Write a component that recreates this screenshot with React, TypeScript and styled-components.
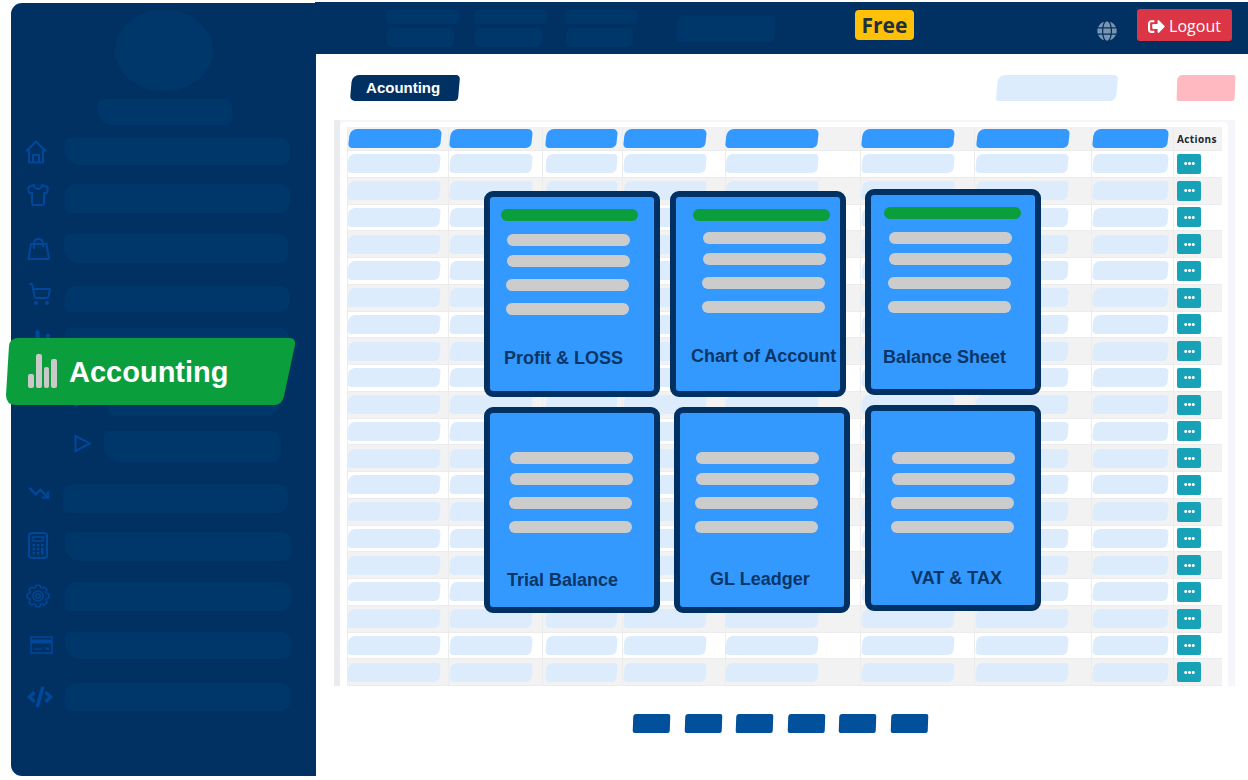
import React from "react";
import styled, { createGlobalStyle } from "styled-components";
import { FaCode, FaEllipsisH, FaGlobe, FaSignOutAlt } from "react-icons/fa";
import { Shirt, ShoppingCart, TrendingDown } from "lucide-react";

const NAVY = "#013162";
const GHOST = "#00376a";
const ICON = "#01479a";
const SKY = "#3399ff";
const PALE = "#dcecfd";

const HomeIcon = () => (
  <svg width="22" height="24" viewBox="0 0 22 24" fill="none" stroke={ICON} strokeWidth="2" strokeLinejoin="round">
    <path d="M1 11.5 L11 1.5 L21 11.5" />
    <path d="M4 9 V22.5 H18 V9" />
    <path d="M8 22.5 V15 H14 V22.5" />
  </svg>
);

const BagIcon = () => (
  <svg width="23" height="22" viewBox="0 0 23 22" fill="none" stroke={ICON} strokeWidth="2" strokeLinejoin="round">
    <path d="M4 6 H19.5 L22 21 H1.5 Z" />
    <path d="M7 11 V6 Q7 1 11.5 1 Q16 1 16 6 V9" />
  </svg>
);

const TriangleIcon = () => (
  <svg width="18" height="19" viewBox="0 0 18 19" fill="none" stroke={ICON} strokeWidth="2">
    <polygon points="1.5,2 16,9.5 1.5,17" />
  </svg>
);

const CalculatorIcon = () => (
  <svg width="20" height="27" viewBox="0 0 20 27" fill="none" stroke={ICON}>
    <rect x="1" y="1" width="18" height="25" rx="3" strokeWidth="2" />
    <rect x="5" y="5" width="10" height="4" strokeWidth="1.5" />
    <g fill={ICON} stroke="none">
      <rect x="4.5" y="12" width="2.4" height="2.4" />
      <rect x="8.8" y="12" width="2.4" height="2.4" />
      <rect x="13" y="12" width="2.4" height="2.4" />
      <rect x="4.5" y="16" width="2.4" height="2.4" />
      <rect x="8.8" y="16" width="2.4" height="2.4" />
      <rect x="4.5" y="20" width="2.4" height="2.4" />
      <rect x="8.8" y="20" width="2.4" height="2.4" />
      <rect x="13" y="16" width="2.4" height="6.4" />
    </g>
  </svg>
);

// 8 tooth gear outline, points worked out around the centre
const gearPath = Array.from({ length: 8 }, (_, i) => {
  const a = (i * Math.PI) / 4;
  const pt = (r: number, d: number) =>
    `${(12 + r * Math.cos(a + d)).toFixed(2)} ${(12 + r * Math.sin(a + d)).toFixed(2)}`;
  return `${i === 0 ? "M" : "L"}${pt(8.6, -0.36)} L${pt(11, -0.17)} L${pt(11, 0.17)} L${pt(8.6, 0.36)}`;
}).join(" ");

const GearIcon = () => (
  <svg width="24" height="24" viewBox="0 0 24 24" fill="none" stroke={ICON} strokeWidth="1.5" strokeLinejoin="round">
    <path d={`${gearPath} Z`} />
    <circle cx="12" cy="12" r="5" />
    <circle cx="12" cy="12" r="2.2" />
  </svg>
);

const CardIcon = () => (
  <svg width="23" height="18" viewBox="0 0 23 18" fill="none" stroke={ICON}>
    <rect x="1" y="1" width="21" height="16" strokeWidth="1.6" />
    <rect x="1" y="3.5" width="21" height="4" fill={ICON} strokeWidth="0" />
    <path d="M4 13 H12" strokeWidth="1.2" />
    <path d="M15.5 12.5 H19" strokeWidth="2" />
  </svg>
);

const ChartIcon = ({ color, width, height }: { color: string; width: number; height: number }) => (
  <svg width={width} height={height} viewBox="0 0 29 34" fill={color}>
    <rect x="0" y="20" width="6" height="14" rx="2" />
    <rect x="8" y="0" width="6" height="34" rx="2" />
    <rect x="16" y="13" width="5" height="21" rx="2" />
    <rect x="23" y="5" width="6" height="29" rx="2" />
  </svg>
);

const navRows = [
  { icon: <HomeIcon />, iconLeft: 25, up: 0, left: 65, right: 290, top: 138, bottom: 165 },
  { icon: <Shirt size={24} color={ICON} strokeWidth={2} />, iconLeft: 26, up: 7, left: 65, right: 290, top: 184, bottom: 213 },
  { icon: <BagIcon />, iconLeft: 27, up: 0, left: 64, right: 288, top: 234, bottom: 263 },
  { icon: <ShoppingCart size={24} color={ICON} strokeWidth={2} />, iconLeft: 28, up: 11, left: 65, right: 290, top: 286, bottom: 312 },
  { icon: <ChartIcon color={ICON} width={20} height={24} />, iconLeft: 30, up: 0, left: 65, right: 289, top: 328, bottom: 356 },
  { icon: <TriangleIcon />, iconLeft: 74, up: 4, left: 108, right: 279, top: 384, bottom: 416 },
  { icon: <TriangleIcon />, iconLeft: 74, up: 6, left: 104, right: 281, top: 431, bottom: 462 },
  { icon: <TrendingDown size={22} color={ICON} strokeWidth={2.6} />, iconLeft: 28, up: 12, left: 63, right: 288, top: 484, bottom: 513 },
  { icon: <CalculatorIcon />, iconLeft: 28, up: 2, left: 65, right: 291, top: 532, bottom: 561 },
  { icon: <GearIcon />, iconLeft: 26, up: 1, left: 65, right: 291, top: 582, bottom: 611 },
  { icon: <CardIcon />, iconLeft: 30, up: 1, left: 65, right: 291, top: 632, bottom: 659 },
  { icon: <FaCode size={26} color={ICON} />, iconLeft: 27, up: 0, left: 65, right: 291, top: 683, bottom: 711 },
];

const columns = [
  { width: 101, bar: 92, headX: 2, cellX: 1 },
  { width: 94, bar: 82, headX: 2, cellX: 2 },
  { width: 80, bar: 71, headX: 4, cellX: 4 },
  { width: 103, bar: 82, headX: 2, cellX: 2 },
  { width: 135, bar: 92, headX: 1, cellX: 1 },
  { width: 114, bar: 92, headX: 2, cellX: 2 },
  { width: 117, bar: 92, headX: 3, cellX: 2 },
  { width: 82, bar: 75, headX: 2, cellX: 2 },
];

const tableRows = Array.from({ length: 20 }, (_, i) => i);

const cards = [
  { label: "Profit & LOSS", left: 484, top: 191, barX: 11, lineTop: 37, lineX: 17, labelX: 14, labelGap: 33, green: true },
  { label: "Chart of Account", left: 670, top: 191, barX: 17, lineTop: 35, lineX: 27, labelX: 15, labelGap: 33, green: true },
  { label: "Balance Sheet", left: 865, top: 189, barX: 13, lineTop: 37, lineX: 18, labelX: 12, labelGap: 34, green: true },
  { label: "Trial Balance", left: 484, top: 407, barX: 0, lineTop: 39, lineX: 20, labelX: 17, labelGap: 37, green: false },
  { label: "GL Leadger", left: 674, top: 407, barX: 0, lineTop: 39, lineX: 16, labelX: 30, labelGap: 36, green: false },
  { label: "VAT & TAX", left: 865, top: 405, barX: 0, lineTop: 41, lineX: 21, labelX: 40, labelGap: 35, green: false },
];

const App = () => {
  return (
    <>
      <GlobalStyle />
      <Page>
        <Sidebar>
          <Avatar />
          <UserName />
          <NavList>
            {navRows.map((row, i) => (
              <NavRow
                key={row.top}
                $gap={row.top - (i === 0 ? 125 : navRows[i - 1].bottom)}
                $height={row.bottom - row.top}
              >
                <IconSlot $width={row.left - 11} $pad={row.iconLeft - 11} $up={row.up}>
                  {row.icon}
                </IconSlot>
                <NavBar $width={row.right - row.left} $alt={i % 2 === 0} />
              </NavRow>
            ))}
          </NavList>
          <ActiveItem>
            <ChartIcon color="#c9c9c9" width={29} height={34} />
            <ActiveLabel>Accounting</ActiveLabel>
          </ActiveItem>
        </Sidebar>

        <Main>
          <TopBar>
            <MenuGroup>
              <MenuStack>
                <MenuTop />
                <MenuBottom />
              </MenuStack>
              <MenuStack>
                <MenuTop />
                <MenuBottom />
              </MenuStack>
              <MenuStack>
                <MenuTop />
                <MenuBottom />
              </MenuStack>
              <MenuWide />
            </MenuGroup>
            <FreeBadge>Free</FreeBadge>
            <GlobeSlot>
              <FaGlobe size={20} color="#7b95b0" />
            </GlobeSlot>
            <LogoutButton>
              <FaSignOutAlt size={17} />
              Logout
            </LogoutButton>
          </TopBar>

          <TitleRow>
            <PageTitle>
              <TitleText>Acounting</TitleText>
            </PageTitle>
            <SearchGhost />
            <DangerGhost />
          </TitleRow>

          <TablePanel>
            <TableCard>
              <Row $head>
                {columns.map((col) => (
                  <Cell key={col.width + col.headX} $width={col.width}>
                    <HeadBar $width={col.bar} $x={col.headX} />
                  </Cell>
                ))}
                <ActionsCell>Actions</ActionsCell>
              </Row>
              {tableRows.map((row) => (
                <Row key={row} $striped={row % 2 === 1}>
                  {columns.map((col) => (
                    <Cell key={col.width + col.cellX} $width={col.width}>
                      <CellBar $width={col.bar} $x={col.cellX} />
                    </Cell>
                  ))}
                  <ActionsCell>
                    <MoreButton>
                      <FaEllipsisH size={11} />
                    </MoreButton>
                  </ActionsCell>
                </Row>
              ))}
            </TableCard>
          </TablePanel>

          <Pagination>
            {[1, 2, 3, 4, 5, 6].map((n) => (
              <PageButton key={n} />
            ))}
          </Pagination>
        </Main>

        {cards.map((card) => (
          <ReportCard key={card.label} $left={card.left} $top={card.top}>
            {card.green && <GreenBar $x={card.barX} />}
            <Lines $top={card.lineTop} $x={card.lineX}>
              <Line />
              <Line />
              <Line />
              <Line />
            </Lines>
            <CardLabel $x={card.labelX} $gap={card.labelGap}>
              {card.label}
            </CardLabel>
          </ReportCard>
        ))}
      </Page>
    </>
  );
};

export default App;

const GlobalStyle = createGlobalStyle`
  html, body {
    margin: 0;
    padding: 0;
    background: #fff;
    overflow: hidden;
  }
  * {
    box-sizing: border-box;
  }
`;

const Page = styled.div`
  position: relative;
  display: flex;
  align-items: flex-start;
  width: 1248px;
  height: 780px;
  padding: 2px 0 0 11px;
  overflow: hidden;
  font-family: "Liberation Sans", Arial, sans-serif;
`;

const Sidebar = styled.aside`
  position: relative;
  flex: none;
  display: flex;
  flex-direction: column;
  align-items: center;
  width: 305px;
  height: 773px;
  margin-top: 1px;
  padding-top: 7px;
  background: ${NAVY};
  border-radius: 11px 0 0 11px;
`;

const Avatar = styled.div`
  width: 98px;
  height: 81px;
  border-radius: 50%;
  background: ${GHOST};
`;

const UserName = styled.div`
  width: 134px;
  height: 26px;
  margin: 8px 0 0 2px;
  border-radius: 3px 8px 6px 14px;
  background: ${GHOST};
`;

const NavList = styled.nav`
  display: flex;
  flex-direction: column;
  align-self: stretch;
`;

const NavRow = styled.div<{ $gap: number; $height: number }>`
  display: flex;
  align-items: center;
  height: ${(p) => p.$height}px;
  margin-top: ${(p) => p.$gap}px;
`;

const IconSlot = styled.div<{ $width: number; $pad: number; $up: number }>`
  flex: none;
  display: flex;
  align-items: center;
  width: ${(p) => p.$width}px;
  padding-left: ${(p) => p.$pad}px;
  margin-bottom: ${(p) => p.$up}px;
`;

const NavBar = styled.div<{ $width: number; $alt: boolean }>`
  flex: none;
  width: ${(p) => p.$width}px;
  height: 100%;
  background: ${GHOST};
  border-radius: ${(p) => (p.$alt ? "5px 9px 8px 15px" : "11px 9px 12px 5px")};
`;

const ActiveItem = styled.div`
  position: absolute;
  left: -5px;
  top: 335px;
  display: flex;
  align-items: center;
  gap: 12px;
  width: 290px;
  height: 67px;
  padding: 0 0 2px 22px;
  background: #0a9e3c;
  clip-path: path("M12 0 H283 Q290 0 289 7 L278 58 Q276 67 268 67 H10 Q0 67 0 57 L3 8 Q4 0 12 0 Z");
`;

const ActiveLabel = styled.span`
  font-size: 29px;
  font-weight: 700;
  line-height: 34px;
  padding-top: 2px;
  color: #fff;
`;

const Main = styled.main`
  flex: none;
  display: flex;
  flex-direction: column;
  width: 932px;
`;

const TopBar = styled.header`
  display: flex;
  align-items: flex-start;
  width: 933px;
  height: 52px;
  margin-left: -1px;
  padding-left: 71px;
  background: ${NAVY};
`;

const MenuGroup = styled.div`
  display: flex;
  align-items: flex-start;
  gap: 15px;
  width: 469px;
  padding-top: 8px;
`;

const MenuStack = styled.div`
  display: flex;
  flex-direction: column;
  gap: 4px;
  width: 73px;

  &:nth-child(3) {
    margin-left: 3px;
  }
`;

const MenuTop = styled.div`
  width: 73px;
  height: 14px;
  border-radius: 4px;
  background: ${GHOST};
  transform: skewX(-3deg);
`;

const MenuBottom = styled.div`
  width: 67px;
  height: 19px;
  margin-left: 1px;
  border-radius: 5px;
  background: ${GHOST};
  transform: skewX(-3deg);
`;

const MenuWide = styled.div`
  width: 98px;
  height: 26px;
  margin: 6px 0 0 24px;
  border-radius: 6px 4px 5px 4px;
  background: ${GHOST};
  transform: skewX(-3deg);
`;

const FreeBadge = styled.div`
  display: flex;
  align-items: center;
  justify-content: center;
  width: 59px;
  height: 30px;
  margin: 8px 0 0 0;
  border-radius: 4px;
  background: #ffc107;
  color: #21303f;
  font-family: "Open Sans", sans-serif;
  font-size: 21px;
  font-weight: 700;
`;

const GlobeSlot = styled.div`
  display: flex;
  margin: 19px 0 0 183px;
`;

const LogoutButton = styled.button`
  display: flex;
  align-items: center;
  justify-content: center;
  gap: 4px;
  width: 95px;
  height: 32px;
  margin: 7px 0 0 20px;
  padding: 2px 0 0;
  border: none;
  border-radius: 3px;
  background: #dc3545;
  color: #fff;
  font-family: "Open Sans", sans-serif;
  font-size: 16px;
  font-weight: 500;
`;

const TitleRow = styled.div`
  display: flex;
  align-items: stretch;
  height: 26px;
  margin-top: 21px;
  padding-left: 35px;
`;

const PageTitle = styled.div`
  display: flex;
  align-items: center;
  width: 108px;
  padding: 0 0 2px 15px;
  background: ${NAVY};
  border-radius: 7px 4px 4px 5px;
  transform: skewX(-5deg);
`;

const TitleText = styled.span`
  display: block;
  transform: skewX(5deg);
  color: #fff;
  font-size: 15px;
  font-weight: 700;
`;

const SearchGhost = styled.div`
  width: 120px;
  margin-left: 538px;
  background: ${PALE};
  border-radius: 7px 4px 6px 2px;
  transform: skewX(-5deg);
`;

const DangerGhost = styled.div`
  width: 58px;
  margin-left: 60px;
  background: #ffb9c0;
  border-radius: 5px 2px 3px 2px;
  transform: skewX(-2deg);
`;

const TablePanel = styled.section`
  width: 901px;
  height: 566px;
  margin: 19px 0 0 18px;
  padding: 2px 7px 0 6px;
  overflow: hidden;
  background: linear-gradient(90deg, #e9ebef 0, #e9ebef 6px, #f4f6fb 6px);
`;

const TableCard = styled.div`
  height: 100%;
  padding: 5px 6px 0 7px;
  overflow: hidden;
  background: #fff;
  border-radius: 5px 5px 0 0;
`;

const Row = styled.div<{ $head?: boolean; $striped?: boolean }>`
  display: flex;
  align-items: stretch;
  height: ${(p) => (p.$head ? 24 : 26.75)}px;
  background: ${(p) => (p.$head || p.$striped ? "#f2f2f2" : "#fff")};
  border-bottom: 1px solid #ececec;
`;

const Cell = styled.div<{ $width: number }>`
  flex: none;
  display: flex;
  align-items: center;
  width: ${(p) => p.$width}px;
  border-left: 1px solid #ececec;
`;

const HeadBar = styled.div<{ $width: number; $x: number }>`
  width: ${(p) => p.$width}px;
  height: 19px;
  margin-left: ${(p) => p.$x - 1}px;
  background: ${SKY};
  border-radius: 7px 5px 5px 4px;
  transform: skewX(-6deg);
`;

const CellBar = styled.div<{ $width: number; $x: number }>`
  width: ${(p) => p.$width}px;
  height: 19px;
  margin-left: ${(p) => p.$x - 1}px;
  background: ${PALE};
  border-radius: 6px 4px 5px 4px;
  transform: skewX(-5deg);
`;

const ActionsCell = styled.div`
  flex: none;
  display: flex;
  align-items: center;
  width: 49px;
  padding-left: 3px;
  border-left: 1px solid #ececec;
  font-family: "Open Sans", sans-serif;
  font-size: 10px;
  font-weight: 700;
  letter-spacing: 0.4px;
  color: #212529;
`;

const MoreButton = styled.button`
  display: flex;
  align-items: center;
  justify-content: center;
  width: 24px;
  height: 20px;
  padding: 0;
  border: none;
  border-radius: 2px;
  background: #17a2b8;
  color: #fff;
`;

const Pagination = styled.nav`
  display: flex;
  gap: 14.6px;
  height: 19px;
  margin: 28px 0 0 317px;
`;

const PageButton = styled.div`
  width: 37px;
  height: 19px;
  background: #01509b;
  border-radius: 3px 2px 2px 2px;
  transform: skewX(-2deg);
`;

const ReportCard = styled.article<{ $left: number; $top: number }>`
  position: absolute;
  left: ${(p) => p.$left}px;
  top: ${(p) => p.$top}px;
  display: flex;
  flex-direction: column;
  width: 176px;
  height: 206px;
  background: ${SKY};
  border: 6px solid ${NAVY};
  border-radius: 9px;
`;

const GreenBar = styled.div<{ $x: number }>`
  flex: none;
  width: 137px;
  height: 12px;
  margin: 12px 0 -24px ${(p) => p.$x}px;
  border-radius: 6px;
  background: #0a9e3c;
`;

const Lines = styled.div<{ $top: number; $x: number }>`
  display: flex;
  flex-direction: column;
  margin: ${(p) => p.$top}px 0 0 ${(p) => p.$x}px;
`;

const Line = styled.div`
  width: 123px;
  height: 12px;
  border-radius: 6px;
  background: #cccccc;
  margin-top: 12px;

  &:first-child {
    margin-top: 0;
  }
  &:nth-child(2) {
    margin-top: 9px;
  }
  &:nth-child(n + 3) {
    margin-left: -1px;
  }
`;

const CardLabel = styled.div<{ $x: number; $gap: number }>`
  margin: ${(p) => p.$gap}px 0 0 ${(p) => p.$x}px;
  font-size: 18px;
  line-height: 20px;
  font-weight: 700;
  white-space: nowrap;
  color: #0a3666;
`;
